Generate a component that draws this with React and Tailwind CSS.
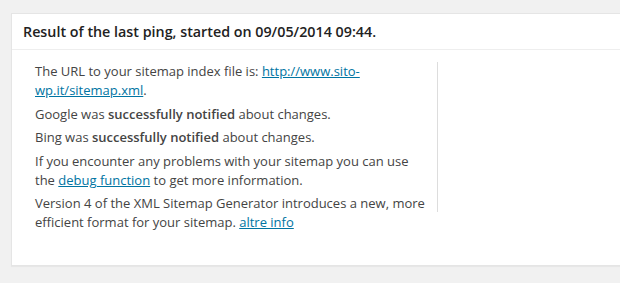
export default function App() {
  return (
    <div className="w-[620px] h-[283px] overflow-hidden bg-[#f1f1f1] pt-[13px] pl-[11px]" style={{ fontFamily: '"Open Sans", sans-serif' }}>
      <div className="w-[640px] h-[253px] bg-white border border-[#e5e5e5] shadow-[0_1px_1px_rgba(0,0,0,0.04)]">
        <div className="h-[36px] border-b border-[#eeeeee] pl-[11px] flex items-center">
          <h3 className="text-[14.3px] font-semibold text-[#222] leading-[19px]">
            Result of the last ping, started on 09/05/2014 09:44.
          </h3>
        </div>
        <div className="flex pt-[12px] pl-[23px]">
          <div className="w-[392px] text-[13px] leading-[19px] text-[#444] flex flex-col gap-[4.5px]">
            <p>
              The URL to your sitemap index file is:{" "}
              <a href="#" className="text-[#0074a2] underline">http://www.sito-wp.it/sitemap.xml</a>.
            </p>
            <p>
              Google was <strong className="font-semibold">successfully notified</strong> about changes.
            </p>
            <p>
              Bing was <strong className="font-semibold">successfully notified</strong> about changes.
            </p>
            <p>
              If you encounter any problems with your sitemap you can use the{" "}
              <a href="#" className="text-[#0074a2] underline">debug function</a> to get more information.
            </p>
            <p>
              Version 4 of the XML Sitemap Generator introduces a new, more efficient format for your sitemap.{" "}
              <a href="#" className="text-[#0074a2] underline">altre info</a>
            </p>
          </div>
          <div className="ml-[10px] h-[150px] border-l border-[#dddddd]" />
        </div>
      </div>
    </div>
  );
}
